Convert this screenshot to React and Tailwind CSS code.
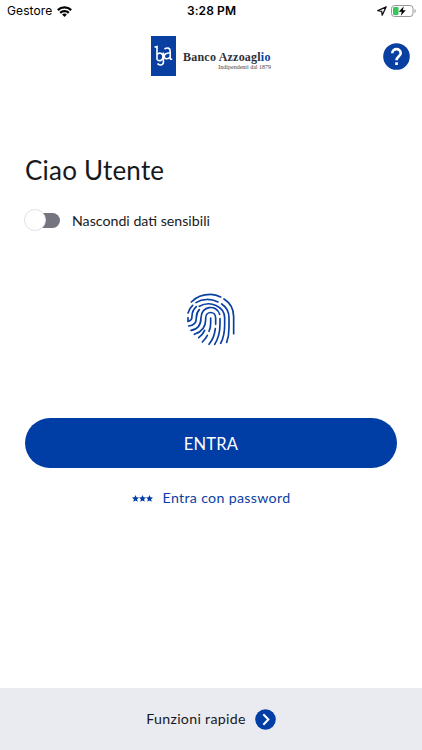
import React, { useState } from 'react'

const StatusBar = () => {
    return (
        <div className="grid grid-cols-3 items-center h-[22px] pl-[7px] pr-[6px] text-black font-['Inter',sans-serif]">
            <div className="flex items-center gap-[5px]">
                <span className="text-[12px] leading-[22px] tracking-[0.1px]">Gestore</span>
                <svg className="w-[15px] h-[11px]" viewBox="0 0 15 11" fill="none" stroke="#000" strokeWidth="2.3">
                    <path d="M.8 4.1a9.6 9.6 0 0 1 13.4 0M3.2 6.9a6.2 6.2 0 0 1 8.6 0" />
                    <path d="M7.5 11 5.1 8.6a3.5 3.5 0 0 1 4.8 0z" fill="#000" stroke="none" />
                </svg>
            </div>
            <span className="text-center text-[12px] leading-[22px] font-semibold tracking-[0.1px]">3:28 PM</span>
            <div className="flex items-center justify-end gap-[4px]">
                <svg className="w-[10px] h-[10px]" viewBox="0 0 10 10" fill="none" stroke="#111" strokeWidth="1.3" strokeLinejoin="round">
                    <path d="M9.2.8.8 4.7l3.9.6.5 3.9z" />
                </svg>
                <svg className="w-[25px] h-[12px]" viewBox="0 0 25 12">
                    <rect x=".5" y=".5" width="21.5" height="11" rx="3" fill="#fff" stroke="#999" />
                    <rect x="2" y="2" width="5.5" height="8" rx="1.2" fill="#35c759" />
                    <path d="M12.8 1.3 7.8 6.7h3l-1 4 5-5.5h-3z" fill="#000" />
                    <path d="M23.5 4v4c1.6-.7 1.6-3.3 0-4z" fill="#999" />
                </svg>
            </div>
        </div>
    )
}

const Logo = () => {
    return (
        <div className="flex">
            <div className="w-[25px] h-[40px] bg-[#0a3fa2]">
                <svg className="w-[25px] h-[40px]" viewBox="0 0 25 40" fill="none" stroke="#fff" strokeWidth="1.6">
                    <path d="M3.5 11.3 6 10.5v13.2" />
                    <path d="M6 18.5c2-2.4 6-1.7 6 2.2s-4 5-6 2.8" />
                    <path d="M13.5 13.2c2.5-2.2 5.7-1.3 5.7 1.8v7.2c0 1 .7 1.3 2 1" />
                    <path d="M19.2 16.8c-3.4.3-6 1.3-6 3.4 0 3 4 3.4 6 .8" />
                    <path d="M12.4 16.5v9.8c0 3.2-4.4 3.4-5.9 1.2" />
                </svg>
            </div>
            <div className="flex flex-col w-[88px] ml-[7px] pt-[14px] font-['Liberation_Serif',serif] whitespace-nowrap">
                <span className="text-[12px] leading-[14px] tracking-[0.22px] font-bold text-[#303036]">Banco Azzoagl<span className="text-[#0a3fa2]">io</span></span>
                <span className="self-end text-[6px] leading-[6px] text-[#44444a]">Indipendenti dal 1879</span>
            </div>
        </div>
    )
}

const Fingerprint = () => {
    return (
        <svg className="w-[62px] h-[68px]" viewBox="0 0 186 204" fill="none" stroke="#0a3fa2" strokeWidth="5" strokeLinecap="round">
            <path d="M34 51C50 34 71 28 92 28c11 0 21 3 30 8" />
            <path d="M132 42c19 12 29 31 29 53v51" />
            <path d="M24 84c3-9 7-17 14-23M48 53c20-13 46-12 66-2" />
            <path d="M125 57c14 9 22 23 22 41v30c0 17-2 31-7 44" />
            <path d="M24 98v11c8-1 12-6 12-15 0-13 4-21 13-29" />
            <path d="M58 64c32-18 76-1 76 35v20c0 22-4 41-12 56" />
            <path d="M26 123c14-1 23-10 23-25 0-10 3-18 9-24" />
            <path d="M33 136c19-3 30-17 30-38 0-36 47-41 56-10" />
            <path d="M120 101v16c0 24-5 44-16 61" />
            <path d="M43 148c21-7 34-22 34-44v-5c0-22 30-22 30 0v19" />
            <path d="M106 131c-2 18-8 34-19 47" />
            <path d="M92 99v15c0 10-1 17-5 25M82 151c-4 8-9 14-15 20M74 136c-4 9-10 16-18 22" />
        </svg>
    )
}

const App = () => {
    const [hidden, setHidden] = useState(false)

    return (
        <div className="flex flex-col h-[750px] w-full bg-white text-[#17191c] font-['Lato',sans-serif]">
            <StatusBar />

            <header className="grid grid-cols-[1fr_auto_1fr] items-start px-[12px] pt-[14px]">
                <span />
                <Logo />
                <button className="justify-self-end mt-[7px]" aria-label="Aiuto">
                    <svg className="w-[27px] h-[27px]" viewBox="0 0 27 27" fill="none">
                        <circle cx="13.5" cy="13.5" r="13.3" fill="#0a3fa2" />
                        <path d="M9.3 10.3c0-5.6 8.4-5.6 8.4 0 0 3.2-4.2 3.4-4.2 7" stroke="#fff" strokeWidth="2.6" />
                        <rect x="12.2" y="19.3" width="2.7" height="2.7" fill="#fff" />
                    </svg>
                </button>
            </header>

            <main className="flex flex-col px-[25px] pt-[76px]">
                <h1 className="text-[26px] leading-[36px] tracking-[0.2px]">Ciao Utente</h1>

                <div className="flex items-center h-[24px] mt-[20px]">
                    <button
                        className="flex items-center w-[35px] h-[15px] rounded-full bg-[#74757f]"
                        role="switch"
                        aria-checked={hidden}
                        onClick={() => setHidden(!hidden)}
                    >
                        <span className={`w-[22px] h-[22px] shrink-0 rounded-full bg-white border border-[#e2e2e4] ${hidden ? 'ml-[14px]' : '-ml-px'}`} />
                    </button>
                    <span className="ml-[12px] pt-[2px] text-[14.2px] leading-[24px]">Nascondi dati sensibili</span>
                </div>

                <div className="flex justify-center mt-[53px]">
                    <Fingerprint />
                </div>

                <button className="h-[50px] mt-[65px] pt-[2px] rounded-full bg-[#003da5] text-white text-[16.5px] tracking-[0.2px]">ENTRA</button>

                <a className="flex items-center justify-center gap-[10px] mt-[18px] text-[14.2px] leading-[24px] tracking-[0.32px] text-[#0a3fa2]">
                    <svg className="w-[21px] h-[7px]" viewBox="0 0 21 7" fill="#003da5">
                        <path d="m3.5 0 1 2.3 2.5.2-1.9 1.7.6 2.5-2.2-1.3-2.2 1.3.6-2.5L0 2.5l2.5-.2z" />
                        <path d="m10.5 0 1 2.3 2.5.2-1.9 1.7.6 2.5-2.2-1.3-2.2 1.3.6-2.5L7 2.5l2.5-.2z" />
                        <path d="m17.5 0 1 2.3 2.5.2-1.9 1.7.6 2.5-2.2-1.3-2.2 1.3.6-2.5-1.9-1.7 2.5-.2z" />
                    </svg>
                    <span>Entra con password</span>
                </a>
            </main>

            <footer className="flex items-center justify-center gap-[9px] h-[62px] mt-auto bg-[#eaebf1]">
                <span className="text-[14.2px] leading-[24px] tracking-[0.3px]">Funzioni rapide</span>
                <svg className="w-[21px] h-[21px]" viewBox="0 0 21 21" fill="none">
                    <circle cx="10.5" cy="10.5" r="10.3" fill="#003da5" />
                    <path d="m8.3 5.3 5.1 5.2-5.1 5.2" stroke="#fff" strokeWidth="2" />
                </svg>
            </footer>
        </div>
    )
}

export default App
